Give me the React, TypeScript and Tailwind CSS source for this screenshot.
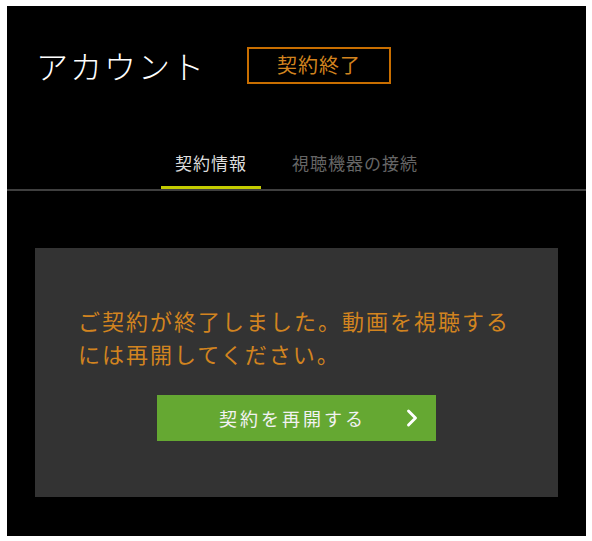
import { ChevronRight } from "lucide-react";

const tabs = [
  { label: "契約情報", active: true },
  { label: "視聴機器の接続", active: false },
];

export default function App() {
  return (
    <div className="w-[592px] h-[541px] bg-white pt-[6px] pl-[7px]" style={{ fontFamily: "'Noto Sans CJK JP', 'Noto Sans', sans-serif" }}>
      <div className="w-[579px] h-[530px] bg-black flex flex-col">
        <header className="flex items-center pl-[29px] pt-[35px]">
          <h1 className="text-[32px] leading-[48px] text-white font-light tracking-[2px]">アカウント</h1>
          <span className="ml-[41px] w-[144px] h-[37px] border-2 border-[#c86e00] flex items-center justify-center text-[20px] text-[#d2841f] tracking-[1px]">
            契約終了
          </span>
        </header>

        <nav className="mt-[58px] flex border-b-2 border-[#3f3f3f]">
          <div className="ml-[154px] flex">
            {tabs.map((t) => (
              <div
                key={t.label}
                className={
                  t.active
                    ? "w-[100px] h-[42px] flex items-start justify-center pt-[3px] text-[17px] text-[#dddddd] tracking-[1px] border-b-[3px] border-[#c4cc00] -mb-[2px]"
                    : "ml-[18px] px-[13px] h-[42px] flex items-start justify-center pt-[3px] text-[17px] text-[#666666] tracking-[1px]"
                }
              >
                {t.label}
              </div>
            ))}
          </div>
        </nav>

        <section className="mt-[57px] ml-[28px] w-[523px] h-[249px] bg-[#333333] flex flex-col">
          <p className="mt-[56px] pl-[43px] pr-[40px] text-[22px] leading-[33px] text-[#d2841f] tracking-[2px]">
            ご契約が終了しました。動画を視聴するには再開してください。
          </p>
          <button className="mt-[25px] ml-[122px] w-[279px] h-[46px] bg-[#65a832] flex items-center text-[18px] text-[#f2f2f2] tracking-[3px]">
            <span className="flex-1 text-center pl-[30px]">契約を再開する</span>
            <ChevronRight size={28} strokeWidth={2.5} className="mr-[10px] text-white" />
          </button>
        </section>
      </div>
    </div>
  );
}
